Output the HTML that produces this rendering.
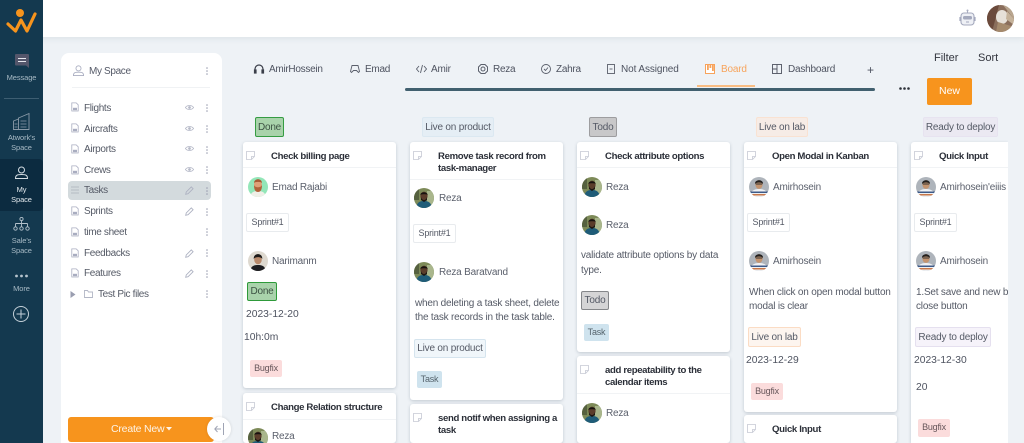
<!DOCTYPE html>
<html><head><meta charset="utf-8"><style>
*{box-sizing:border-box}
html,body{margin:0;padding:0;width:1024px;height:443px;overflow:hidden;background:#eef2f6;font-family:"Liberation Sans",sans-serif}
#root{position:absolute;left:0;top:0;width:1024px;height:443px;overflow:hidden;background:#eef2f6}
.a{position:absolute}
.t{position:absolute;white-space:nowrap;line-height:16px;height:16px;font-size:10px;letter-spacing:-.2px;color:#555a66;margin-top:2px}
.l{letter-spacing:-.35px}
.s{position:absolute;white-space:nowrap;line-height:10px;width:43px;left:0;text-align:center;font-size:7.5px;letter-spacing:-.1px;color:#a8bac5}
.n{color:#5a5f6b}
.d{font-size:10.3px;letter-spacing:0}
.h{font-size:9.6px;font-weight:bold;letter-spacing:-.35px;color:#2b2f38;line-height:11.5px;position:absolute;white-space:nowrap;margin-top:1px}
.card{position:absolute;background:#fff;border-radius:3px;box-shadow:0 1px 3px rgba(60,80,100,.25)}
.hl{position:absolute;height:1px;background:#f1f3f5}
.chip{position:absolute;white-space:nowrap;font-size:10px;letter-spacing:-.2px;color:#555a66;text-align:center;border-radius:2px;border:1px solid;padding-top:1px}
.sp{background:#fff;border-color:#e8ebee;font-size:9px;color:#555a66;width:43px;height:19px;line-height:17px;padding-top:0}
.bug{background:#fbdcdc;border:0;font-size:9px;color:#66565a;width:32px;height:17px;line-height:17px;padding-top:0}
.task{background:#cfe3ee;border:0;font-size:9px;color:#55636c;width:25px;height:17px;line-height:17px;padding-top:0}
svg{position:absolute;overflow:visible}
</style></head><body><div id="root">
<svg width="0" height="0" style="position:absolute"><defs>
<clipPath id="c"><circle cx="10" cy="10" r="10"/></clipPath>
<symbol id="reza" viewBox="0 0 20 20"><g clip-path="url(#c)"><rect width="20" height="20" fill="#7d8a58"/><rect x="13" y="3" width="7" height="14" fill="#a9b68c"/><rect x="0" y="0" width="5" height="12" fill="#56613f"/><path d="M2 20c1-6 4-7 8-7s7 1 8 7z" fill="#1f5c78"/><ellipse cx="10" cy="8" rx="3.6" ry="4.4" fill="#5b3d2b"/><path d="M6.300 7c0-3.500 7.400-3.500 7.400 0 0-1-7.400-1-7.400 0z" fill="#16120f"/><path d="M7 9c1 4 5 4 6 0v3l-3 2-3-2z" fill="#1c1613"/></g></symbol>
<symbol id="amir" viewBox="0 0 20 20"><g clip-path="url(#c)"><rect width="20" height="20" fill="#aeb4bb"/><path d="M1 20c0-6 4-8 9-8s9 2 9 8z" fill="#eef0f3"/><rect x="1" y="14.500" width="18" height="1.500" fill="#3d5a88"/><rect x="1" y="17" width="18" height="1.500" fill="#c8784a"/><ellipse cx="10" cy="7.500" rx="3.600" ry="4.400" fill="#c4946f"/><path d="M6 7c-.5-5 8.500-5 8 0-1-2-7-2-8 0z" fill="#22201f"/><rect x="6.800" y="6.500" width="6.400" height="1" fill="#333"/></g></symbol>
<symbol id="emad" viewBox="0 0 20 20"><g clip-path="url(#c)"><rect width="20" height="20" fill="#93e6b8"/><path d="M2 20c1-5 4-6 8-6s7 1 8 6z" fill="#f0efe8"/><ellipse cx="10" cy="8" rx="4" ry="5" fill="#e0a078"/><path d="M6 6c0-5 8-5 8 0-1-1.500-7-1.500-8 0z" fill="#a85a35"/><path d="M6 8c0 5 1.500 7 4 7s4-2 4-7c-1 3-7 3-8 0z" fill="#b2623a"/></g></symbol>
<symbol id="nari" viewBox="0 0 20 20"><g clip-path="url(#c)"><rect width="20" height="20" fill="#ded9d0"/><path d="M2 20c1-5 4-6 8-6s7 1 8 6z" fill="#1d1d20"/><ellipse cx="10" cy="8.500" rx="3.800" ry="4.800" fill="#b98a6c"/><path d="M5.800 8c-.8-6.500 9.200-6.500 8.400 0-1-2.500-7.400-2.500-8.400 0z" fill="#1d1a18"/></g></symbol>
<symbol id="doc" viewBox="0 0 10 12"><path d="M1 .8h5.500L9 3.300V11H1z" fill="none" stroke="#a9adc0" stroke-width="1"/><path d="M2.500 7h5v3h-5z" fill="#a9adc0"/></symbol>
<symbol id="eye" viewBox="0 0 12 8"><path d="M.5 4C3 .5 9 .5 11.500 4 9 7.500 3 7.500 .5 4z" fill="none" stroke="#b3b7c6"/><circle cx="6" cy="4" r="1.800" fill="#b3b7c6"/></symbol>
<symbol id="pen" viewBox="0 0 10 10"><path d="M.8 9.200l.6-2.600L7 1l2 2-5.600 5.600z" fill="none" stroke="#aeb2c2"/></symbol>
<symbol id="vd" viewBox="0 0 2 8"><circle cx="1" cy="1" r=".8" fill="#9a9eb0"/><circle cx="1" cy="4" r=".8" fill="#9a9eb0"/><circle cx="1" cy="7" r=".8" fill="#9a9eb0"/></symbol>
<symbol id="note" viewBox="0 0 9 9"><path d="M.5.500h8v5l-3 3h-5z M8.500 5.500h-3v3" fill="none" stroke="#c6c9d4" stroke-width=".8"/></symbol>
</defs></svg>

<!-- top bar -->
<div class="a" style="left:0;top:0;width:1024px;height:37px;background:#fff;box-shadow:0 1px 6px rgba(90,110,130,.14)"></div>
<svg style="left:959px;top:9px" width="17" height="18" viewBox="0 0 17 18"><path d="M8.500 1v3" stroke="#a9adc0"/><circle cx="8.500" cy="1.500" r="1" fill="#a9adc0"/><rect x="2" y="4" width="13" height="12" rx="3" fill="#eef0f5" stroke="#a4a9bd" stroke-width="1.100"/><rect x="4" y="7" width="9" height="3.500" rx="1.500" fill="#a4a9bd"/><path d="M7 13h3" stroke="#a4a9bd"/><path d="M1 8v4M16 8v4" stroke="#a4a9bd" stroke-width="1.200"/></svg>
<svg style="left:987px;top:5px" width="27" height="27" viewBox="0 0 27 27"><defs><clipPath id="u"><circle cx="13.500" cy="13.500" r="13.500"/></clipPath></defs><g clip-path="url(#u)"><rect width="27" height="27" fill="#8a6e5c"/><path d="M0 0h12L5 27H0z" fill="#6b4a3c"/><path d="M16 0h11v14z" fill="#b9a68f"/><ellipse cx="15" cy="12" rx="6" ry="7" fill="#e6e0d8"/><path d="M11 17l13 4 3 6H9z" fill="#a58a6d"/><path d="M20 6l7 8v6l-8-6z" fill="#c5b29a"/></g></svg>

<!-- sidebar -->
<div class="a" style="left:0;top:0;width:43px;height:443px;background:#14394f"></div>
<svg style="left:6px;top:8px" width="31" height="26" viewBox="0 0 31 26"><circle cx="14" cy="5" r="4" fill="#f7941d"/><path d="M2 16l7.500 7L15 12l6 11 8-17" fill="none" stroke="#f7941d" stroke-width="3.200" stroke-linejoin="round" stroke-linecap="round"/></svg>
<svg style="left:15px;top:54px" width="14" height="14" viewBox="0 0 14 14"><path d="M1 0h12a1 1 0 0 1 1 1v13l-3-2.500H1a1 1 0 0 1-1-1V1a1 1 0 0 1 1-1z" fill="#54566b"/><path d="M3 4.500h8M3 7.500h8" stroke="#e7e8ee" stroke-width="1.100"/></svg>
<div class="s" style="top:73px">Message</div>
<div class="a" style="left:4px;top:98px;width:35px;height:1px;background:#3e5e72"></div>
<svg style="left:13px;top:113px" width="17" height="17" viewBox="0 0 17 17" fill="none" stroke="#8a9aa8" stroke-width=".9"><path d="M.5 16.500V8l5-2v10.500zM5.500 16.500V5L16 .5v16z"/><path d="M7.500 8h6M7.500 11h6M7.500 14h6M1.500 11h3M1.500 14h3" stroke="#6f8494"/></svg>
<div class="s" style="top:133px">Atwork's</div>
<div class="s" style="top:143px">Space</div>
<div class="a" style="left:0;top:159px;width:43px;height:52px;background:#0c2b40;border-radius:0 4px 4px 0"></div>
<svg style="left:15px;top:166px" width="13" height="13" viewBox="0 0 13 13" fill="none" stroke="#d6dee4"><circle cx="6.500" cy="4" r="3"/><path d="M.5 12.500c0-3.500 2-4 6-4s6 .5 6 4z"/></svg>
<div class="s" style="top:185px;color:#e3e9ed">My</div>
<div class="s" style="top:195px;color:#e3e9ed">Space</div>
<svg style="left:13px;top:217px" width="17" height="14" viewBox="0 0 17 14" fill="none" stroke="#b4c2cc" stroke-width=".9"><circle cx="8.500" cy="2" r="1.600"/><path d="M8.500 3.500v3M2.500 6.500h12M2.500 6.500v3M8.500 6.500v3M14.500 6.500v3"/><circle cx="2.500" cy="11.500" r="1.700"/><circle cx="8.500" cy="11.500" r="1.700"/><circle cx="14.500" cy="11.500" r="1.700"/></svg>
<div class="s" style="top:236px">Sale's</div>
<div class="s" style="top:246px">Space</div>
<svg style="left:15px;top:274px" width="13" height="4"><circle cx="1.500" cy="2" r="1.400" fill="#b7c4cd"/><circle cx="6.500" cy="2" r="1.400" fill="#b7c4cd"/><circle cx="11.500" cy="2" r="1.400" fill="#b7c4cd"/></svg>
<div class="s" style="top:284px">More</div>
<svg style="left:13px;top:306px" width="16" height="16" viewBox="0 0 16 16" fill="none" stroke="#c4d0d8"><circle cx="8" cy="8" r="7.500"/><path d="M8 3.500v9M3.500 8h9"/></svg>

<!-- left panel -->
<div class="a" style="left:61px;top:53px;width:161px;height:390px;background:#fff;border-radius:8px 8px 0 0"></div>
<svg style="left:73px;top:65px" width="11" height="11" viewBox="0 0 13 13" fill="none" stroke="#a9adc0"><circle cx="6.500" cy="4" r="3"/><path d="M.5 12.500c0-3.500 2-4 6-4s6 .5 6 4z"/></svg>
<div class="t l" style="left:89px;top:62px;color:#555a68">My Space</div>
<svg style="left:206px;top:67px" width="2" height="8"><use href="#vd" width="2" height="8"/></svg>
<div class="a" style="left:72px;top:87px;width:138px;height:1px;background:#f0f2f4"></div>
<div class="a" style="left:68px;top:181px;width:143px;height:19px;background:#d3dadd;border-radius:4px"></div>

<svg style="left:71px;top:102px" width="8" height="10"><use href="#doc" width="8" height="10"/></svg><div class="t l" style="left:84px;top:99px">Flights</div><svg style="left:185px;top:104px" width="9" height="7"><use href="#eye" width="9" height="7"/></svg><svg style="left:206px;top:104px" width="2" height="8"><use href="#vd" width="2" height="8"/></svg>
<svg style="left:71px;top:123px" width="8" height="10"><use href="#doc" width="8" height="10"/></svg><div class="t l" style="left:84px;top:120px">Aircrafts</div><svg style="left:185px;top:125px" width="9" height="7"><use href="#eye" width="9" height="7"/></svg><svg style="left:206px;top:125px" width="2" height="8"><use href="#vd" width="2" height="8"/></svg>
<svg style="left:71px;top:144px" width="8" height="10"><use href="#doc" width="8" height="10"/></svg><div class="t l" style="left:84px;top:140px">Airports</div><svg style="left:185px;top:145px" width="9" height="7"><use href="#eye" width="9" height="7"/></svg><svg style="left:206px;top:146px" width="2" height="8"><use href="#vd" width="2" height="8"/></svg>
<svg style="left:71px;top:165px" width="8" height="10"><use href="#doc" width="8" height="10"/></svg><div class="t l" style="left:84px;top:161px">Crews</div><svg style="left:185px;top:166px" width="9" height="7"><use href="#eye" width="9" height="7"/></svg><svg style="left:206px;top:166px" width="2" height="8"><use href="#vd" width="2" height="8"/></svg>
<svg style="left:71px;top:186px" width="8" height="8" fill="none" stroke="#b5bcc4"><path d="M0 1h8M0 4h8M0 7h8"/></svg><div class="t l" style="left:84px;top:181px">Tasks</div><svg style="left:185px;top:186px" width="9" height="9"><use href="#pen" width="9" height="9"/></svg><svg style="left:206px;top:187px" width="2" height="8"><use href="#vd" width="2" height="8"/></svg>
<svg style="left:71px;top:206px" width="8" height="10"><use href="#doc" width="8" height="10"/></svg><div class="t l" style="left:84px;top:202px">Sprints</div><svg style="left:185px;top:207px" width="9" height="9"><use href="#pen" width="9" height="9"/></svg><svg style="left:206px;top:208px" width="2" height="8"><use href="#vd" width="2" height="8"/></svg>
<svg style="left:71px;top:227px" width="8" height="10"><use href="#doc" width="8" height="10"/></svg><div class="t l" style="left:84px;top:223px">time sheet</div><svg style="left:206px;top:228px" width="2" height="8"><use href="#vd" width="2" height="8"/></svg>
<svg style="left:71px;top:248px" width="8" height="10"><use href="#doc" width="8" height="10"/></svg><div class="t l" style="left:84px;top:244px">Feedbacks</div><svg style="left:185px;top:249px" width="9" height="9"><use href="#pen" width="9" height="9"/></svg><svg style="left:206px;top:249px" width="2" height="8"><use href="#vd" width="2" height="8"/></svg>
<svg style="left:71px;top:268px" width="8" height="10"><use href="#doc" width="8" height="10"/></svg><div class="t l" style="left:84px;top:264px">Features</div><svg style="left:185px;top:269px" width="9" height="9"><use href="#pen" width="9" height="9"/></svg><svg style="left:206px;top:270px" width="2" height="8"><use href="#vd" width="2" height="8"/></svg>
<svg style="left:70px;top:291px" width="6" height="7"><path d="M.5 0L5.500 3.500.5 7z" fill="#9a9eb0"/></svg><svg style="left:84px;top:290px" width="9" height="8" fill="none" stroke="#b3b7c6" stroke-width=".9"><path d="M.5 7.500V.5h3l1 1.500h4v5.500z"/></svg><div class="t l" style="left:98px;top:285px">Test Pic files</div><svg style="left:206px;top:290px" width="2" height="8"><use href="#vd" width="2" height="8"/></svg>

<div class="a" style="left:68px;top:417px;width:146px;height:25px;background:#f7941d;border-radius:3px"></div>
<div class="t" style="left:111px;top:419px;font-size:10.5px;color:#fdf3e6">Create New</div>
<svg style="left:166px;top:427px" width="6" height="4"><path d="M0 0h6L3 3.500z" fill="#fdf3e6"/></svg>
<div class="a" style="left:207px;top:417px;width:24px;height:24px;border-radius:50%;background:#fff;box-shadow:0 0 3px rgba(0,0,0,.12)"></div>
<svg style="left:214px;top:423px" width="10" height="12" fill="none" stroke="#9fa4b4"><path d="M9.500 0v12M7 6H.8M3.500 3L.8 6l2.700 3"/></svg>

<!-- tabs -->
<svg style="left:254px;top:64px" width="10" height="10" viewBox="0 0 10 10" fill="none" stroke="#3b3f4a" stroke-width="1.200"><path d="M1 8V5a4 4 0 0 1 8 0v3"/><rect x=".5" y="6" width="1.500" height="3" fill="#3b3f4a"/><rect x="8" y="6" width="1.500" height="3" fill="#3b3f4a"/></svg>
<div class="t" style="left:269px;top:60px;color:#4e5360;letter-spacing:-.28px">AmirHossein</div>
<svg style="left:350px;top:65px" width="10" height="8" viewBox="0 0 10 8" fill="none" stroke="#5a5f6b" stroke-width=".9"><path d="M2 .5h6l1.500 6-1 1-2-2h-3l-2 2-1-1z"/></svg>
<div class="t" style="left:365px;top:60px;color:#4e5360;letter-spacing:-.28px">Emad</div>
<svg style="left:416px;top:64px" width="11" height="10" viewBox="0 0 11 10" fill="none" stroke="#5a5f6b" stroke-width=".9"><path d="M3 2L.5 5 3 8M8 2l2.500 3L8 8M6.500 1l-2 8"/></svg>
<div class="t" style="left:431px;top:60px;color:#4e5360;letter-spacing:-.2px">Amir</div>
<svg style="left:478px;top:64px" width="10" height="10" viewBox="0 0 10 10" fill="none" stroke="#5a5f6b"><path d="M3 .5h4L9.500 3v4L7 9.500H3L.5 7V3z"/><circle cx="5" cy="5" r="2"/></svg>
<div class="t" style="left:493px;top:60px;color:#4e5360;letter-spacing:-.28px">Reza</div>
<svg style="left:541px;top:64px" width="10" height="10" viewBox="0 0 10 10" fill="none" stroke="#5a5f6b" stroke-width=".9"><circle cx="5" cy="5" r="4.500"/><path d="M3 5l1.500 1.500L7 3.500"/></svg>
<div class="t" style="left:556px;top:60px;color:#4e5360;letter-spacing:-.28px">Zahra</div>
<svg style="left:607px;top:64px" width="8" height="10" viewBox="0 0 8 10" fill="none" stroke="#5a5f6b" stroke-width=".9"><rect x=".5" y=".5" width="7" height="9"/><path d="M2.500 5h3"/></svg>
<div class="t" style="left:621px;top:60px;color:#4e5360;letter-spacing:-.1px">Not Assigned</div>
<svg style="left:705px;top:64px" width="10" height="10" viewBox="0 0 10 10"><rect x=".5" y=".5" width="9" height="9" fill="#fff" stroke="#f7a35c"/><rect x="2" y="1" width="1.800" height="5" fill="#f7a35c"/><rect x="4.500" y="1" width="1.800" height="3" fill="#f7a35c"/><rect x="7" y="1" width="1.800" height="6" fill="#f7a35c"/></svg>
<div class="t" style="left:721px;top:60px;color:#f7a45c">Board</div>
<svg style="left:772px;top:64px" width="10" height="10" viewBox="0 0 10 10" fill="none" stroke="#4e5360" stroke-width=".9"><rect x=".5" y=".5" width="9" height="9"/><path d="M5 .5v9M.5 5h4.500"/></svg>
<div class="t" style="left:788px;top:60px;color:#4e5360;letter-spacing:-.2px">Dashboard</div>
<div class="t" style="left:867px;top:60px;font-size:12px;color:#4e5360">+</div>
<div class="a" style="left:697px;top:85px;width:58px;height:2px;background:#f9bd83"></div>
<div class="a" style="left:405px;top:88px;width:470px;height:3px;background:#41606f;border-radius:2px"></div>
<div class="t" style="left:934px;top:48px;font-size:11px;letter-spacing:0;color:#33363f">Filter</div>
<div class="t" style="left:978px;top:48px;font-size:11px;letter-spacing:0;color:#33363f">Sort</div>
<svg style="left:899px;top:87px" width="11" height="3"><circle cx="1.500" cy="1.500" r="1.300" fill="#2c3038"/><circle cx="5.500" cy="1.500" r="1.300" fill="#2c3038"/><circle cx="9.500" cy="1.500" r="1.300" fill="#2c3038"/></svg>
<div class="a" style="left:927px;top:78px;width:45px;height:27px;background:#f7941d;border-radius:2px;color:#fff;font-size:10.5px;text-align:center;line-height:27px">New</div>

<!-- column headers -->
<div class="chip" style="left:255px;top:117px;width:29px;height:20px;line-height:17px;background:#a9d3ab;border-color:#359c42;color:#3d5243">Done</div>
<div class="chip" style="left:422px;top:117px;width:72px;height:20px;line-height:17px;background:#e5eef5;border-color:#dbe8f1">Live on product</div>
<div class="chip" style="left:589px;top:117px;width:28px;height:20px;line-height:17px;background:#c8c8c9;border-color:#9d9d9f">Todo</div>
<div class="chip" style="left:756px;top:117px;width:52px;height:20px;line-height:17px;background:#f6ece6;border-color:#f9e2d2">Live on lab</div>
<div class="chip" style="left:923px;top:117px;width:75px;height:20px;line-height:17px;background:#ebe9f2;border-color:#e7e3f0">Ready to deploy</div>

<!-- column 1 -->
<div class="card" style="left:243px;top:142px;width:153px;height:246px"></div>
<svg style="left:246px;top:151px" width="9" height="9"><use href="#note" width="9" height="9"/></svg>
<div class="h" style="left:271px;top:150px">Check billing page</div>
<div class="hl" style="left:243px;top:167px;width:153px"></div>
<svg style="left:248px;top:177px" width="20" height="20"><use href="#emad" width="20" height="20"/></svg>
<div class="t n" style="left:272px;top:178px">Emad Rajabi</div>
<div class="chip sp" style="left:246px;top:213px">Sprint#1</div>
<svg style="left:248px;top:251px" width="20" height="20"><use href="#nari" width="20" height="20"/></svg>
<div class="t n" style="left:272px;top:252px">Narimanm</div>
<div class="chip" style="left:247px;top:282px;width:30px;height:19px;line-height:16px;background:#a9d3ab;border-color:#2e9a3a;color:#3d5243">Done</div>
<div class="t d" style="left:246px;top:305px;color:#4e5360">2023-12-20</div>
<div class="t d" style="left:244px;top:328px;color:#4e5360">10h:0m</div>
<div class="chip bug" style="left:250px;top:360px">Bugfix</div>

<div class="card" style="left:243px;top:393px;width:153px;height:50px;overflow:hidden">
<svg style="left:3px;top:9px" width="9" height="9"><use href="#note" width="9" height="9"/></svg>
<div class="h" style="left:28px;top:8px">Change Relation structure</div>
<div class="hl" style="left:0;top:26px;width:153px"></div>
<div class="a" style="left:5px;top:35px;width:20px;height:15px;overflow:hidden"><svg style="left:0;top:0;overflow:hidden" width="20" height="20"><use href="#reza" width="20" height="20"/></svg></div>
<div class="t n" style="left:29px;top:36px;height:12px;line-height:12px">Reza</div>
</div>

<!-- column 2 -->
<div class="card" style="left:410px;top:142px;width:153px;height:258px"></div>
<svg style="left:413px;top:151px" width="9" height="9"><use href="#note" width="9" height="9"/></svg>
<div class="h" style="left:438px;top:150px">Remove task record from<br>task-manager</div>
<div class="hl" style="left:410px;top:179px;width:153px"></div>
<svg style="left:414px;top:188px" width="20" height="20"><use href="#reza" width="20" height="20"/></svg>
<div class="t n" style="left:439px;top:189px">Reza</div>
<div class="chip sp" style="left:413px;top:224px">Sprint#1</div>
<svg style="left:414px;top:262px" width="20" height="20"><use href="#reza" width="20" height="20"/></svg>
<div class="t n" style="left:439px;top:263px">Reza Baratvand</div>
<div class="t" style="left:415px;top:294px">when deleting a task sheet, delete</div>
<div class="t" style="left:415px;top:308px">the task records in the task table.</div>
<div class="chip" style="left:414px;top:339px;width:72px;height:19px;line-height:16px;background:#f0f6fa;border-color:#d5e4ee">Live on product</div>
<div class="chip task" style="left:417px;top:371px">Task</div>

<div class="card" style="left:410px;top:404px;width:153px;height:39px"></div>
<svg style="left:413px;top:413px" width="9" height="9"><use href="#note" width="9" height="9"/></svg>
<div class="h" style="left:438px;top:412px">send notif when assigning a<br>task</div>

<!-- column 3 -->
<div class="card" style="left:577px;top:142px;width:153px;height:210px"></div>
<svg style="left:580px;top:151px" width="9" height="9"><use href="#note" width="9" height="9"/></svg>
<div class="h" style="left:605px;top:150px">Check attribute options</div>
<div class="hl" style="left:577px;top:167px;width:153px"></div>
<svg style="left:582px;top:177px" width="20" height="20"><use href="#reza" width="20" height="20"/></svg>
<div class="t n" style="left:606px;top:178px">Reza</div>
<svg style="left:582px;top:215px" width="20" height="20"><use href="#reza" width="20" height="20"/></svg>
<div class="t n" style="left:606px;top:216px">Reza</div>
<div class="t" style="left:581px;top:246px">validate attribute options by data</div>
<div class="t" style="left:581px;top:261px">type.</div>
<div class="chip" style="left:581px;top:291px;width:28px;height:19px;line-height:16px;background:#d5d5d6;border-color:#85878a">Todo</div>
<div class="chip task" style="left:584px;top:324px">Task</div>

<div class="card" style="left:577px;top:356px;width:153px;height:87px"></div>
<svg style="left:580px;top:365px" width="9" height="9"><use href="#note" width="9" height="9"/></svg>
<div class="h" style="left:605px;top:364px">add repeatability to the<br>calendar items</div>
<div class="hl" style="left:577px;top:393px;width:153px"></div>
<svg style="left:582px;top:403px" width="20" height="20"><use href="#reza" width="20" height="20"/></svg>
<div class="t n" style="left:606px;top:404px">Reza</div>

<!-- column 4 -->
<div class="card" style="left:744px;top:142px;width:153px;height:270px"></div>
<svg style="left:747px;top:151px" width="9" height="9"><use href="#note" width="9" height="9"/></svg>
<div class="h" style="left:772px;top:150px">Open Modal in Kanban</div>
<div class="hl" style="left:744px;top:167px;width:153px"></div>
<svg style="left:749px;top:177px" width="20" height="20"><use href="#amir" width="20" height="20"/></svg>
<div class="t n" style="left:773px;top:178px">Amirhosein</div>
<div class="chip sp" style="left:747px;top:213px">Sprint#1</div>
<svg style="left:749px;top:251px" width="20" height="20"><use href="#amir" width="20" height="20"/></svg>
<div class="t n" style="left:773px;top:252px">Amirhosein</div>
<div class="t" style="left:749px;top:283px">When click on open modal button</div>
<div class="t" style="left:749px;top:297px">modal is clear</div>
<div class="chip" style="left:748px;top:327px;width:53px;height:20px;line-height:17px;background:#fdf5ef;border-color:#fbdcc4">Live on lab</div>
<div class="t d" style="left:746px;top:351px;color:#4e5360">2023-12-29</div>
<div class="chip bug" style="left:751px;top:383px">Bugfix</div>

<div class="card" style="left:744px;top:415px;width:153px;height:28px"></div>
<svg style="left:747px;top:424px" width="9" height="9"><use href="#note" width="9" height="9"/></svg>
<div class="h" style="left:772px;top:423px">Quick Input</div>

<!-- column 5 (clipped) -->
<div class="a" style="left:905px;top:138px;width:103px;height:305px;overflow:hidden">
<div class="card" style="left:6px;top:4px;width:97px;height:301px;border-radius:3px 0 0 0"></div>
<svg style="left:9px;top:13px" width="9" height="9"><use href="#note" width="9" height="9"/></svg>
<div class="h" style="left:34px;top:12px">Quick Input</div>
<div class="hl" style="left:6px;top:29px;width:97px"></div>
<svg style="left:11px;top:39px" width="20" height="20"><use href="#amir" width="20" height="20"/></svg>
<div class="t n" style="left:35px;top:40px;width:68px;overflow:hidden">Amirhosein'eiiis</div>
<div class="chip sp" style="left:9px;top:75px">Sprint#1</div>
<svg style="left:11px;top:113px" width="20" height="20"><use href="#amir" width="20" height="20"/></svg>
<div class="t n" style="left:35px;top:114px">Amirhosein</div>
<div class="t" style="left:11px;top:145px;width:92px;overflow:hidden">1.Set save and new but</div>
<div class="t" style="left:11px;top:159px">close button</div>
<div class="chip" style="left:10px;top:189px;width:76px;height:20px;line-height:17px;background:#f6f3fa;border-color:#e5e0ef">Ready to deploy</div>
<div class="t d" style="left:9px;top:213px;color:#4e5360">2023-12-30</div>
<div class="t d" style="left:11px;top:240px;color:#4e5360">20</div>
<div class="chip bug" style="left:13px;top:281px;height:18px">Bugfix</div>
</div>
</div></body></html>
